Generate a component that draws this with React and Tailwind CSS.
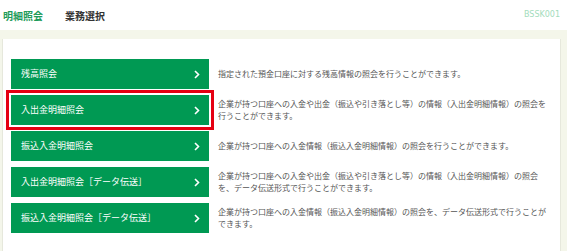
import React from 'react';

const items = [
  {
    label: '残高照会',
    desc: '指定された預金口座に対する残高情報の照会を行うことができます。',
  },
  {
    label: '入出金明細照会',
    desc: '企業が持つ口座への入金や出金（振込や引き落とし等）の情報（入出金明細情報）の照会を行うことができます。',
    active: true,
  },
  {
    label: '振込入金明細照会',
    desc: '企業が持つ口座への入金情報（振込入金明細情報）の照会を行うことができます。',
  },
  {
    label: '入出金明細照会［データ伝送］',
    desc: '企業が持つ口座への入金や出金（振込や引き落とし等）の情報（入出金明細情報）の照会を、データ伝送形式で行うことができます。',
  },
  {
    label: '振込入金明細照会［データ伝送］',
    desc: '企業が持つ口座への入金情報（振込入金明細情報）の照会を、データ伝送形式で行うことができます。',
  },
];

const Chevron = () => (
  <svg width="6" height="9" viewBox="0 0 6 9" fill="none">
    <polyline points="1,1 4.5,4.5 1,8" stroke="white" strokeWidth="1.6" />
  </svg>
);

const App = () => {
  return (
    <div
      className="w-[567px] h-[251px] overflow-hidden bg-[#f4f6ea] flex flex-col"
      style={{ fontFamily: '"Noto Sans CJK JP", "Noto Sans", sans-serif' }}>
      <div className="h-[30px] bg-white flex items-center pl-[3px] pr-[7px] shrink-0">
        <span className="text-[10px] font-bold text-[#1e9b5a]">明細照会</span>
        <span className="ml-[22px] text-[10px] font-bold text-[#333]">業務選択</span>
        <span
          className="ml-auto text-[8px] text-[#a3dcbc]"
          style={{ fontFamily: '"DejaVu Sans", sans-serif' }}>
          BSSK001
        </span>
      </div>
      <div className="flex-1 mt-[9px] ml-[2px] mr-[6px] bg-white border-x border-[#e6e8dc] pt-[20px] pl-[8px] flex flex-col gap-[6px]">
        {items.map(item => (
          <div key={item.label} className="flex items-center gap-[9px]">
            <button
              type="button"
              className={
                'w-[198px] h-[30px] shrink-0 bg-[#009953] flex items-center justify-between pl-[10px] pr-[9px] text-white text-[9px] text-left ' +
                (item.active ? 'outline-[3px] outline-solid outline-[#e50012] outline-offset-[2px]' : '')
              }>
              <span>{item.label}</span>
              <Chevron />
            </button>
            <p className="w-[332px] text-[8px] leading-[12px] text-[#555]">{item.desc}</p>
          </div>
        ))}
      </div>
    </div>
  );
};

export default App;
